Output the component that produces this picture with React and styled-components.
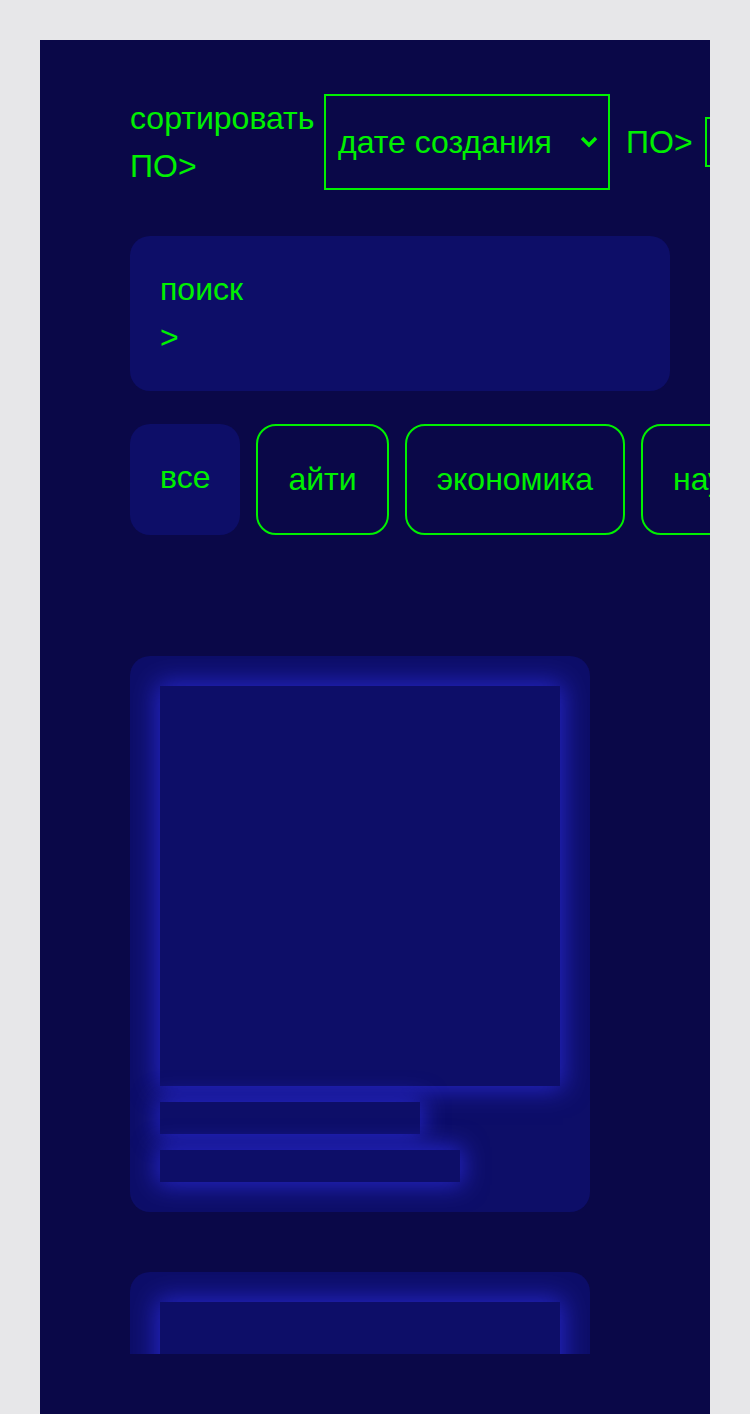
import styled, { createGlobalStyle } from "styled-components";

const GlobalStyle = createGlobalStyle`
    html, body {
        margin: 0;
        padding: 0;
        background: #e7e7e9;
        font-family: "Liberation Sans", Arial, sans-serif;
    }
`;

const Page = styled.div`
    padding: 40px 40px 0;
    height: 100vh;
    box-sizing: border-box;
    display: flex;
`;

const Panel = styled.main`
    flex: 1;
    min-width: 0;
    background: #0a0848;
    color: #00f000;
    font-size: 32px;
    line-height: 48px;
    padding: 54px 40px 60px 90px;
    display: flex;
    flex-direction: column;
    overflow: hidden;
`;

const SortRow = styled.div`
    display: flex;
    align-items: center;
    gap: 10px;
    width: 540px;
`;

const SortLabel = styled.span`
    width: 184px;
    min-width: 184px;
`;

const SelectBox = styled.div`
    position: relative;
    flex-shrink: 0;
    box-sizing: border-box;
    width: ${(p) => p.$width}px;
    height: ${(p) => p.$height}px;
    border: 2px solid #00f000;
    padding: 0 12px;
    display: flex;
    align-items: center;
    white-space: nowrap;
`;

const Chevron = styled.svg`
    position: absolute;
    right: 9px;
    top: 50%;
    transform: translateY(-50%);
`;

const Word = styled.span`
    flex-shrink: 0;
    white-space: nowrap;
    margin: 0 2px 0 6px;
`;

const Search = styled.div`
    margin-top: 46px;
    width: 540px;
    box-sizing: border-box;
    padding: 30px;
    border-radius: 20px;
    background: #0d0e68;
    line-height: 47.5px;
`;

const Chips = styled.div`
    margin-top: 33px;
    display: flex;
    gap: 16px;
`;

const Chip = styled.div`
    flex-shrink: 0;
    box-sizing: border-box;
    height: 111px;
    padding: 30px;
    border-radius: 20px;
    white-space: nowrap;
    background: ${(p) => (p.$active ? "#0d0e68" : "transparent")};
    border: ${(p) => (p.$active ? "none" : "2px solid #00f000")};
    line-height: 46px;
`;

const Feed = styled.div`
    margin-top: 121px;
    flex: 1;
    min-height: 0;
    overflow: hidden;
    display: flex;
    flex-direction: column;
    gap: 60px;
`;

const Card = styled.article`
    flex-shrink: 0;
    width: 460px;
    box-sizing: border-box;
    padding: 30px;
    border-radius: 20px;
    background: #0d0e68;
    overflow: hidden;
    display: flex;
    flex-direction: column;
    gap: 16px;
`;

const Skeleton = styled.div`
    width: ${(p) => p.$width}px;
    height: ${(p) => p.$height}px;
    background: #0d0e68;
    box-shadow: 0 0 24px 3px #2626c8;
`;

function ChevronIcon() {
    return (
        <Chevron width="20" height="14" viewBox="0 0 20 14">
            <path d="M3 3 L10 10 L17 3" fill="none" stroke="#00f000" strokeWidth="3.5" />
        </Chevron>
    );
}

function SkeletonCard() {
    return (
        <Card>
            <Skeleton $width={400} $height={400} />
            <Skeleton $width={260} $height={32} />
            <Skeleton $width={300} $height={32} />
        </Card>
    );
}

export default function App() {
    const chips = ["айти", "экономика", "наука", "спорт"];

    return (
        <Page>
            <GlobalStyle />
            <Panel>
                <SortRow>
                    <SortLabel>сортировать ПО&gt;</SortLabel>
                    <SelectBox $width={286} $height={96}>
                        дате создания
                        <ChevronIcon />
                    </SelectBox>
                    <Word>ПО&gt;</Word>
                    <SelectBox $width={160} $height={50} />
                </SortRow>

                <Search>
                    поиск
                    <br />
                    &gt;
                </Search>

                <Chips>
                    <Chip $active>все</Chip>
                    {chips.map((c) => (
                        <Chip key={c}>{c}</Chip>
                    ))}
                </Chips>

                <Feed>
                    <SkeletonCard />
                    <SkeletonCard />
                </Feed>
            </Panel>
        </Page>
    );
}
